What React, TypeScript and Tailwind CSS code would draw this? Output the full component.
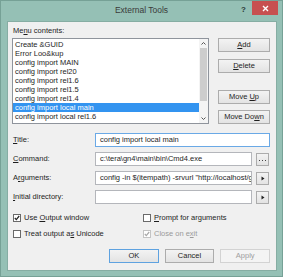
import React from 'react';

// Renders "&Title" as Title with an underlined mnemonic letter
function Mnemonic({ text }: { text: string }) {
  const i = text.indexOf('&');
  if (i < 0) return <span>{text}</span>;
  return (
    <span className="whitespace-pre">
      {text.slice(0, i)}
      <u className="underline-offset-[1px]">{text[i + 1]}</u>
      {text.slice(i + 2)}
    </span>
  );
}

const items = [
  'Create &GUID',
  'Error Loo&kup',
  'config import MAIN',
  'config import rel20',
  'config import rel1.6',
  'config import rel1.5',
  'config import rel1.4',
  'config import local main',
  'config import local rel1.6',
  'schema import local rel1.6',
];

function Btn({ label, className = '', disabled = false, primary = false }: { label: string; className?: string; disabled?: boolean; primary?: boolean }) {
  return (
    <button
      className={
        'h-[14px] flex items-center justify-center border bg-linear-to-b from-[#f3f3f3] to-[#e3e3e3] text-[7.5px] leading-none ' +
        (primary ? 'border-[#5ea2e0] ' : disabled ? 'border-[#d3d3d3] ' : 'border-[#acacac] ') +
        (disabled ? 'text-[#a0a0a0] from-[#f4f4f4] to-[#f4f4f4] ' : 'text-[#1e1e1e] ') +
        className
      }
    >
      <Mnemonic text={label} />
    </button>
  );
}

function Check({ label, checked = false, disabled = false }: { label: string; checked?: boolean; disabled?: boolean }) {
  return (
    <div className={'flex items-center h-[10px] gap-[2px] ' + (disabled ? 'text-[#9a9a9a]' : 'text-[#1e1e1e]')}>
      <span
        className={
          'w-[8px] h-[8px] ml-[1px] flex items-center justify-center bg-white border ' +
          (disabled ? 'border-[#c4c4c4]' : 'border-[#6a6a6a]')
        }
      >
        {checked && (
          <svg width="6" height="6" viewBox="0 0 6 6">
            <polyline points="0.8,3 2.3,4.6 5.2,1" fill="none" stroke={disabled ? '#a8a8a8' : '#222'} strokeWidth="1.2" />
          </svg>
        )}
      </span>
      <span className="ml-[1px]">
        <Mnemonic text={label} />
      </span>
    </div>
  );
}

function Field({ label, value = '', focused = false, button }: { label: string; value?: string; focused?: boolean; button?: React.ReactNode }) {
  return (
    <div className="flex items-center h-[14px]">
      <span className="w-[83px] pl-[1px]">
        <Mnemonic text={label} />
      </span>
      <div
        className={
          'flex-1 h-full bg-white border flex items-center px-[4px] overflow-hidden whitespace-nowrap ' +
          (focused ? 'border-[#6aa9e6]' : 'border-[#b4b6bb]')
        }
      >
        {value}
      </div>
      {button && (
        <div className="ml-[4px] w-[13px] h-[13px] mr-[1px] border border-[#acacac] bg-linear-to-b from-[#f3f3f3] to-[#e3e3e3] flex items-center justify-center">
          {button}
        </div>
      )}
    </div>
  );
}

const Arrow = () => (
  <svg width="4" height="5" viewBox="0 0 4 5">
    <polygon points="0.5,0.5 3.5,2.5 0.5,4.5" fill="#222" />
  </svg>
);

const Dots = () => (
  <svg width="7" height="2" viewBox="0 0 7 2" className="mt-[3px]">
    <rect x="0" y="0" width="1" height="1" fill="#444" />
    <rect x="3" y="0" width="1" height="1" fill="#444" />
    <rect x="6" y="0" width="1" height="1" fill="#444" />
  </svg>
);

export default function App() {
  return (
    <div className="w-[283px] h-[277px] bg-[#95c0b5] border border-[#76a196] flex flex-col font-['Liberation_Sans',Arial,sans-serif] text-[7.5px] text-[#1e1e1e]">
      {/* title bar */}
      <div className="h-[20px] grid grid-cols-[1fr_auto_1fr]">
        <div />
        <div className="pt-[4px] text-[8.5px] leading-[11px] text-[#3a3a3a]">External Tools</div>
        <div className="flex justify-end items-start">
          <span className="mt-[4px] mr-[6px] text-[8px] font-bold text-[#2a3a36] leading-[9px]">?</span>
          <div className="w-[26px] h-[14px] mr-[4px] bg-[#c75050] flex items-center justify-center">
            <svg width="7" height="7" viewBox="0 0 7 7">
              <path d="M1 1 L6 6 M6 1 L1 6" stroke="#fff" strokeWidth="1.4" />
            </svg>
          </div>
        </div>
      </div>

      {/* client area */}
      <div className="flex-1 ml-[6px] mr-[5px] mb-[5px] bg-[#f0f0f0] border border-[#86ada3] pl-[4px] pr-[6px] flex flex-col">
        <div className="mt-[4px] h-[10px] leading-[10px] pl-[1px]">
          <Mnemonic text="Me&nu contents:" />
        </div>

        <div className="mt-[2px] flex">
          <div className="w-[197px] h-[86px] bg-white border border-[#8f949c] flex overflow-hidden">
            <div className="flex-1 pt-[0.5px] overflow-hidden">
              {items.map((it, i) => (
                <div
                  key={it}
                  className={
                    'h-[9px] leading-[9px] pl-[2px] whitespace-nowrap ' +
                    (i === 7 ? 'bg-[#3394f0] text-white' : '')
                  }
                >
                  {it}
                </div>
              ))}
            </div>
            {/* scrollbar */}
            <div className="w-[9px] bg-[#f4f4f4] flex flex-col items-center">
              <div className="h-[9px] flex items-center justify-center">
                <svg width="5" height="3" viewBox="0 0 5 3">
                  <polyline points="0.5,2.5 2.5,0.5 4.5,2.5" fill="none" stroke="#555" strokeWidth="1" />
                </svg>
              </div>
              <div className="w-[7px] h-[53px] bg-[#cdcdcd]" />
              <div className="flex-1" />
              <div className="h-[9px] flex items-center justify-center">
                <svg width="5" height="3" viewBox="0 0 5 3">
                  <polyline points="0.5,0.5 2.5,2.5 4.5,0.5" fill="none" stroke="#555" strokeWidth="1" />
                </svg>
              </div>
            </div>
          </div>

          <div className="ml-[9px] w-[52px] flex flex-col">
            <Btn label="&Add" className="w-full" />
            <Btn label="&Delete" className="w-full mt-[7px]" />
            <Btn label="Move &Up" className="w-full mt-[17px]" />
            <Btn label="Move Do&wn" className="w-full mt-[6px]" />
          </div>
        </div>

        <div className="mt-[9px] flex flex-col gap-[5px]">
          <Field label="&Title:" value="config import local main" focused />
          <Field label="&Command:" value="c:\tera\gn4\main\bin\Cmd4.exe" button={<Dots />} />
          <Field label="A&rguments:" value='config -in $(itempath) -srvurl "http://localhost/gn4' button={<Arrow />} />
          <Field label="&Initial directory:" button={<Arrow />} />
        </div>

        <div className="mt-[9px] grid grid-cols-[130px_1fr] gap-y-[6px]">
          <Check label="Use &Output window" checked />
          <Check label="&Prompt for arguments" />
          <Check label="Treat output a&s Unicode" />
          <Check label="Close on e&xit" checked disabled />
        </div>

        <div className="mt-[10px] flex gap-[6px] pl-[97px]">
          <Btn label="OK" primary className="w-[51px]" />
          <Btn label="Cancel" className="w-[51px]" />
          <Btn label="Apply" disabled className="w-[51px]" />
        </div>
      </div>
    </div>
  );
}
